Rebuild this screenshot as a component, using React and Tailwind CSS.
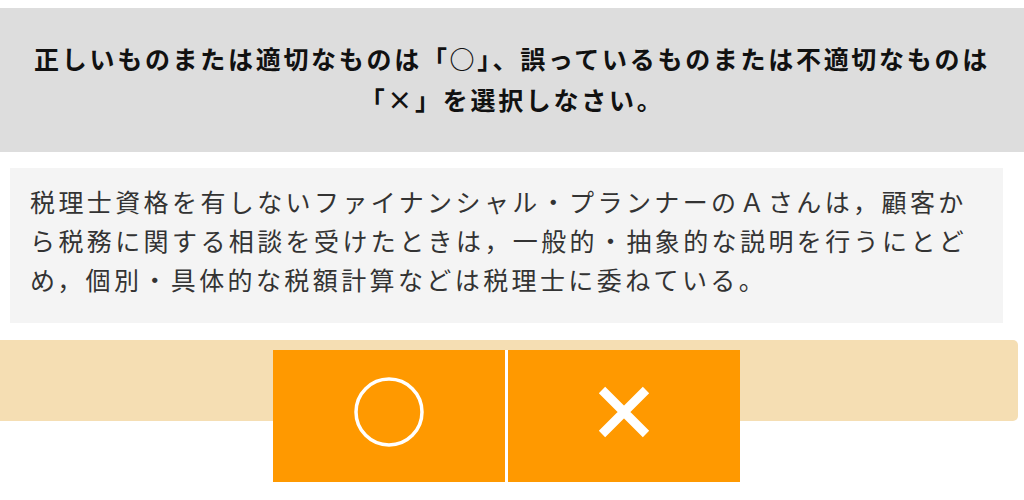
import React from "react";

// Maru (correct) mark
const MaruIcon = () => (
  <svg width="72" height="72" viewBox="0 0 72 72" className="block">
    <circle cx="36" cy="36" r="33" fill="none" stroke="#ffffff" strokeWidth="3.5" />
  </svg>
);

// Batsu (wrong) mark
const BatsuIcon = () => (
  <svg width="56" height="56" viewBox="0 0 56 56" className="block">
    <path d="M6 6 L50 50 M50 6 L6 50" stroke="#ffffff" strokeWidth="9" strokeLinecap="butt" />
  </svg>
);

const AnswerButton = ({ children, label }) => (
  <button
    type="button"
    aria-label={label}
    className="w-[232px] h-[132px] bg-[#ff9900] flex items-center justify-center pb-[8px]"
  >
    {children}
  </button>
);

export default function App() {
  return (
    <div className="w-[1024px] h-[500px] bg-white overflow-hidden font-['Noto_Sans_CJK_JP',sans-serif]">
      <div className="h-[8px]" />

      {/* Instruction */}
      <div className="bg-[#dddddd] h-[144px] flex items-center justify-center px-[16px] pb-[2px]">
        <p className="text-center text-[#111111] font-bold text-[25px] leading-[41px] tracking-[2.7px]">
          正しいものまたは適切なものは「○」、誤っているものまたは不適切なものは「×」を選択しなさい。
        </p>
      </div>

      {/* Question */}
      <div className="mt-[16px] ml-[10px] w-[993px] bg-[#f4f4f4] pl-[20px] pr-[16px] pt-[14px] pb-[24px]">
        <p className="text-[#333333] text-[25px] leading-[39px] tracking-[3.4px]">
          税理士資格を有しないファイナンシャル・プランナーのＡさんは，顧客から税務に関する相談を受けたときは，一般的・抽象的な説明を行うにとどめ，個別・具体的な税額計算などは税理士に委ねている。
        </p>
      </div>

      {/* Answer bar */}
      <div className="mt-[17px] w-[1018px] h-[81px] bg-[#f5deb3] rounded-r-[5px] pt-[10px]">
        <div className="ml-[273px] w-fit flex gap-[3px] bg-white">
          <AnswerButton label="正しい">
            <MaruIcon />
          </AnswerButton>
          <AnswerButton label="誤り">
            <BatsuIcon />
          </AnswerButton>
        </div>
      </div>
    </div>
  );
}
